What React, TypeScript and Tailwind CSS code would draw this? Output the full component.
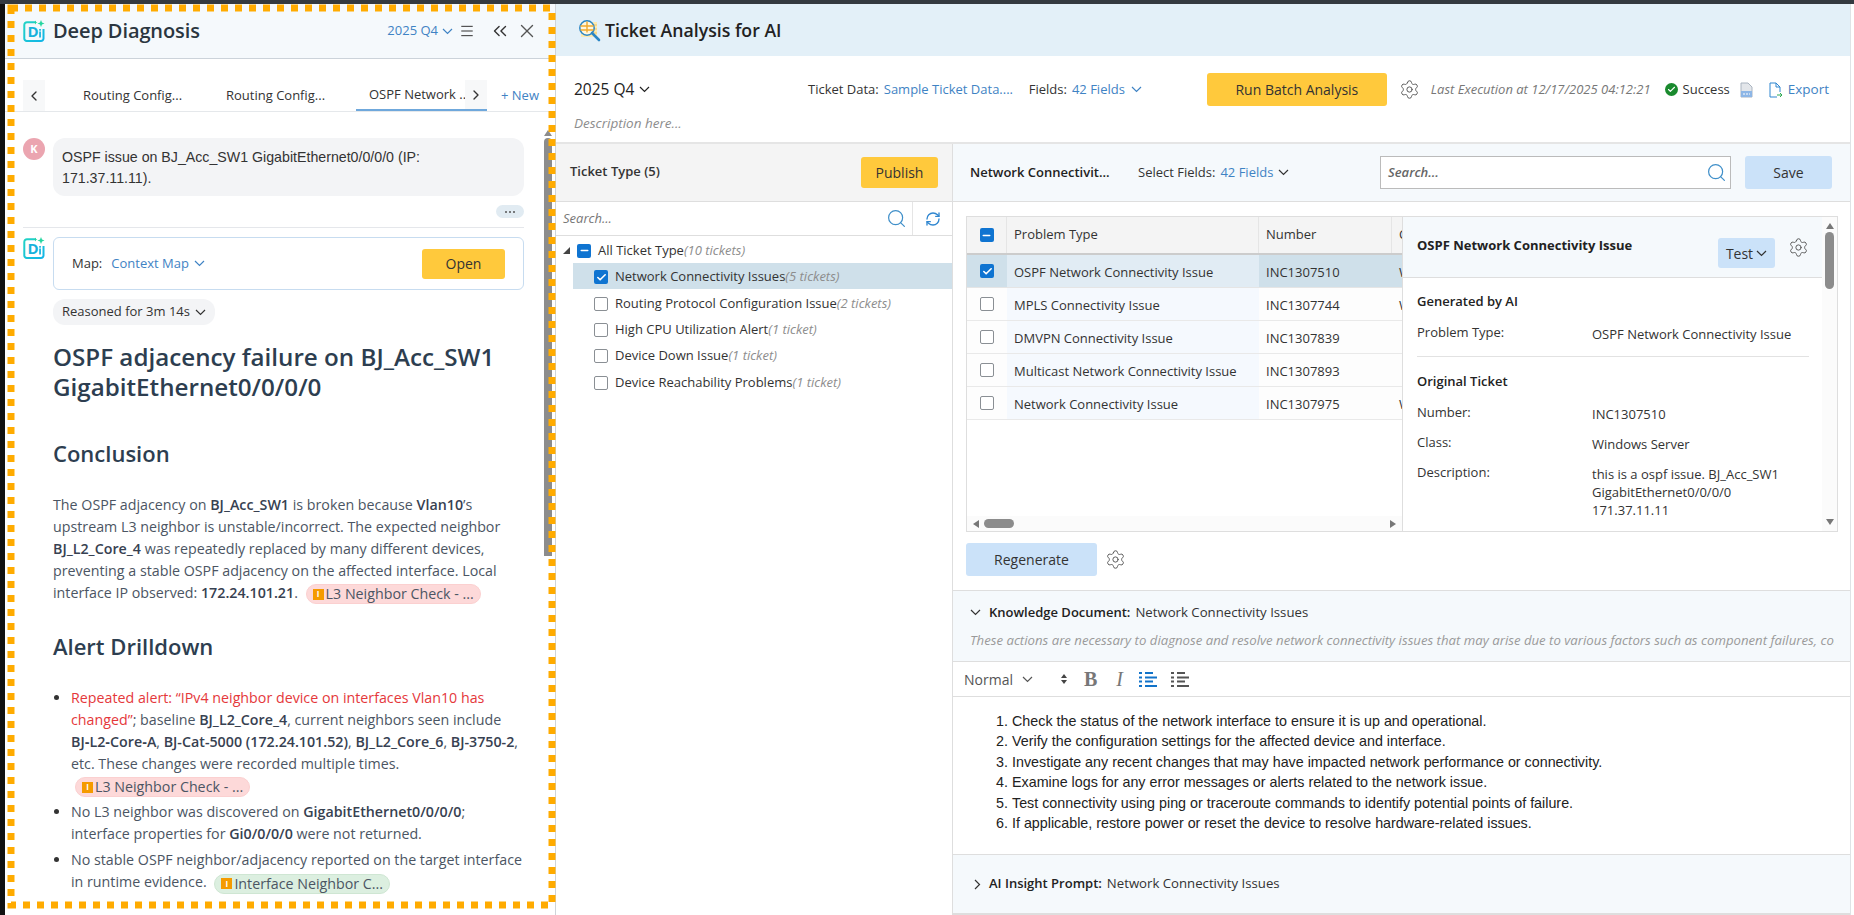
import { ChevronLeft, ChevronRight, ChevronsLeft, Menu, RefreshCw, Search, Settings, X, Check, Minus } from "lucide-react";

const openSans = "font-['Open_Sans',sans-serif]";
const strong = "font-semibold text-[#374151]";

const Chev = ({ className = "" }: { className?: string }) => (
  <svg className={`shrink-0 ${className}`} width="11" height="7" viewBox="0 0 11 7" fill="none">
    <path d="M1 1l4.5 4.5L10 1" stroke="currentColor" strokeWidth="1.2" />
  </svg>
);

const DLogo = () => (
  <svg className="shrink-0" width="22" height="22" viewBox="0 0 22 22" fill="none">
    <defs>
      <linearGradient id="dl" x1="0" y1="0" x2="1" y2="1">
        <stop offset="0" stopColor="#22d3c5" />
        <stop offset="1" stopColor="#12b5e8" />
      </linearGradient>
    </defs>
    <path d="M13 2.2H4A2.7 2.7 0 0 0 1.3 5v13.5A2.5 2.5 0 0 0 4 21h14a2.5 2.5 0 0 0 2.5-2.5V9" stroke="url(#dl)" strokeWidth="2" />
    <text x="4.5" y="17" fontSize="15" fontWeight="700" fill="#17b2dc" fontFamily="Open Sans, sans-serif">D</text>
    <rect x="16.2" y="11.5" width="1.7" height="6" fill="#17b2dc" />
    <rect x="16.2" y="9" width="1.7" height="1.7" fill="#17b2dc" />
    <path d="M18 0l1 2.4L21.5 3.5 19 4.6 18 7l-1-2.4-2.5-1.1L17 2.4z" fill="#25d6a0" />
    <path d="M12.5 0.5l.6 1.4 1.4.6-1.4.6-.6 1.4-.6-1.4-1.4-.6 1.4-.6z" fill="#25d6a0" />
  </svg>
);

const TicketLogo = () => (
  <svg width="23" height="23" viewBox="0 0 23 23" fill="none">
    <rect x="3" y="3" width="16" height="15" fill="#fdeab0" />
    <path d="M13 6h6M14 10h5M11 14h8" stroke="#f3c766" />
    <circle cx="9" cy="9" r="7.2" fill="#fff7dd" stroke="#2b86c5" strokeWidth="1.5" />
    <path d="M2.5 7h13M2.5 11h13M9 2.5v11" stroke="#f0a92e" strokeWidth="1.4" />
    <path d="M14 14l7 7" stroke="#2b86c5" strokeWidth="2.6" strokeLinecap="round" />
  </svg>
);

const ListIcon = ({ color, className }: { color: string; className: string }) => (
  <svg className={className} width="18" height="17" viewBox="0 0 18 17">
    <path d="M6 2h8M6 6.5h12M6 10.5h8M6 15h12" stroke={color} strokeWidth="2" />
    <path d="M0 1h3v2H0zM0 5.5h3v2H0zM0 9.5h3v2H0zM0 14h3v2H0z" fill={color} />
  </svg>
);

const CheckBox = ({ state }: { state?: "on" | "partial" }) => {
  if (state === "on")
    return (
      <span className="flex h-[14px] w-[14px] shrink-0 items-center justify-center rounded-[2px] bg-[#0f74d1]">
        <Check size={11} strokeWidth={3.5} color="#fff" />
      </span>
    );
  if (state === "partial")
    return (
      <span className="flex h-[14px] w-[14px] shrink-0 items-center justify-center rounded-[2px] bg-[#0f74d1]">
        <Minus size={11} strokeWidth={3.5} color="#fff" />
      </span>
    );
  return <span className="h-[14px] w-[14px] shrink-0 rounded-[2px] border border-[#8a8f94] bg-white" />;
};

const Pill = ({ label, green }: { label: string; green?: boolean }) => (
  <span
    className={`inline-flex h-[20px] items-center gap-[2px] rounded-full border px-[6px] align-middle ${
      green ? "border-[#cfe6d3] bg-[#dcefe0]" : "border-[#fbd0d0] bg-[#fdd9d9]"
    }`}
  >
    <span className="flex h-[11px] w-[11px] items-center justify-center bg-[#f59b00] text-[8px] font-bold leading-none text-white">
      I
    </span>
    {label}
  </span>
);

const tickets = [
  { label: "Routing Protocol Configuration Issue", count: "(2 tickets)", h: "h-[27px]" },
  { label: "High CPU Utilization Alert", count: "(1 ticket)", h: "h-[26px]" },
  { label: "Device Down Issue", count: "(1 ticket)", h: "h-[26px]" },
  { label: "Device Reachability Problems", count: "(1 ticket)", h: "h-[27px]" },
];

const rows = [
  { type: "MPLS Connectivity Issue", num: "INC1307744", cls: "W" },
  { type: "DMVPN Connectivity Issue", num: "INC1307839", cls: "" },
  { type: "Multicast Network Connectivity Issue", num: "INC1307893", cls: "" },
  { type: "Network Connectivity Issue", num: "INC1307975", cls: "W" },
];

const steps = [
  "Check the status of the network interface to ensure it is up and operational.",
  "Verify the configuration settings for the affected device and interface.",
  "Investigate any recent changes that may have impacted network performance or connectivity.",
  "Examine logs for any error messages or alerts related to the network issue.",
  "Test connectivity using ping or traceroute commands to identify potential points of failure.",
  "If applicable, restore power or reset the device to resolve hardware-related issues.",
];

const DiagnosisPanel = () => (
  <aside className="relative flex h-full w-[551px] shrink-0 flex-col overflow-hidden border-r border-[#cfd4d9] bg-white">
    <header className="flex h-[55px] shrink-0 items-center border-b border-[#ccd3da] bg-[#f5f9fc] pl-[18px] pr-[17px]">
      <DLogo />
      <h1 className="ml-[8px] text-[20px] font-semibold tracking-[-0.1px] text-[#2b3640]">Deep Diagnosis</h1>
      <span className="ml-auto flex items-center gap-[4px] text-[13px] text-[#3f83c4]">
        2025 Q4 <Chev />
      </span>
      <Menu size={16} strokeWidth={1.5} className="ml-[6px] text-[#333]" />
      <ChevronsLeft size={22} strokeWidth={1.5} className="ml-[14px] text-[#333]" />
      <X size={22} strokeWidth={1.5} className="ml-[5px] text-[#555]" />
    </header>
    <nav className="mt-[21px] flex h-[32px] shrink-0 items-stretch border-b border-[#e5e8eb] pl-[18px] text-[13px] text-[#333]">
      <span className="flex w-[22px] items-center justify-center bg-[#f7f8f9]">
        <ChevronLeft size={16} />
      </span>
      <span className="ml-[38px] flex w-[143px] items-center">Routing Config...</span>
      <span className="flex w-[130px] items-center">Routing Config...</span>
      <span className="relative flex w-[131px] items-center border-b-2 border-[#6fa8dc] pl-[13px]">
        OSPF Network ..
        <span className="absolute bottom-0 right-0 top-0 flex w-[22px] items-center justify-center bg-[#f7f8f9]">
          <ChevronRight size={16} />
        </span>
      </span>
      <span className="ml-[14px] flex items-center text-[13px] text-[#3f83c4]">+ New</span>
    </nav>
    <div className="min-h-0 flex-1 overflow-hidden pl-[18px] pr-[31px] pt-[26px] text-[14.25px] text-[#4b5563]">
      <div className="flex gap-[8px]">
        <span className="flex h-[22px] w-[22px] shrink-0 items-center justify-center rounded-full bg-[#eba5b0] text-[11px] font-bold text-white">
          K
        </span>
        <p className="h-[58px] flex-1 rounded-xl bg-[#f3f4f6] px-[9px] py-[9px] font-['Liberation_Sans',sans-serif] text-[14.2px] leading-[21px] text-[#333]">
          OSPF issue on BJ_Acc_SW1 GigabitEthernet0/0/0/0 (IP:
          <br />
          171.37.11.11).
        </p>
      </div>
      <div className="mt-[9px] flex justify-end">
        <span className="flex h-[13px] w-[28px] items-center justify-center gap-[2px] rounded-full bg-[#e1ebf2]">
          <i className="h-[2px] w-[2px] rounded-full bg-[#555]" />
          <i className="h-[2px] w-[2px] rounded-full bg-[#555]" />
          <i className="h-[2px] w-[2px] rounded-full bg-[#555]" />
        </span>
      </div>
      <div className="mt-[9px] flex gap-[8px] border-t border-[#e5e7eb] pt-[9px]">
        <DLogo />
        <div className="flex-1">
          <div className="flex h-[53px] items-center rounded-md border border-[#c7dcf0] pl-[18px] pr-[18px] text-[13px]">
            <span className="text-[#333]">Map:</span>
            <span className="ml-[9px] text-[#3f83c4]">Context Map</span>
            <Chev className="ml-[5px] text-[#3f83c4]" />
            <button className="ml-auto h-[30px] w-[83px] rounded-[3px] bg-[#ffc93c] text-[14px] text-[#333]">Open</button>
          </div>
          <span className="mt-[9px] inline-flex h-[26px] items-center gap-[5px] rounded-xl bg-[#f3f4f6] px-[9px] text-[13px] text-[#333]">
            Reasoned for 3m 14s <Chev />
          </span>
        </div>
      </div>
      <div className="ml-[30px]">
        <h2 className="mt-[17px] text-[24.2px] font-semibold leading-[30px] text-[#2d3e50]">
          OSPF adjacency failure on BJ_Acc_SW1 GigabitEthernet0/0/0/0
        </h2>
        <h3 className="mt-[37px] text-[22px] font-semibold leading-[28px] text-[#2d3e50]">Conclusion</h3>
        <p className="mt-[27px] leading-[22px]">
          The OSPF adjacency on <b className={strong}>BJ_Acc_SW1</b> is broken because <b className={strong}>Vlan10</b>’s
          upstream L3 neighbor is unstable/incorrect. The expected neighbor <b className={strong}>BJ_L2_Core_4</b> was
          repeatedly replaced by many different devices, preventing a stable OSPF adjacency on the affected interface.
          Local interface IP observed: <b className={strong}>172.24.101.21</b>.{" "}
          <span className="ml-[4px]">
            <Pill label="L3 Neighbor Check - ..." />
          </span>
        </p>
        <h3 className="mt-[28px] text-[22px] font-semibold leading-[28px] text-[#2d3e50]">Alert Drilldown</h3>
        <ul className="mt-[27px] list-disc pl-[18px] leading-[22px] marker:text-[#333]">
          <li>
            <span className="text-[#e5383b]">Repeated alert: “IPv4 neighbor device on interfaces Vlan10 has changed”</span>
            ; baseline <b className={strong}>BJ_L2_Core_4</b>, current neighbors seen include{" "}
            <b className={strong}>BJ&#8209;L2&#8209;Core&#8209;A</b>, <b className={strong}>BJ-Cat-5000 (172.24.101.52)</b>,{" "}
            <b className={strong}>BJ_L2_Core_6</b>, <b className={strong}>BJ-3750-2</b>, etc. These changes were recorded
            multiple times.{" "}
            <span className="ml-[4px]">
              <Pill label="L3 Neighbor Check - ..." />
            </span>
          </li>
          <li className="mt-[4px]">
            No L3 neighbor was discovered on <b className={strong}>GigabitEthernet0/0/0/0</b>; interface properties for{" "}
            <b className={strong}>Gi0/0/0/0</b> were not returned.
          </li>
          <li className="mt-[4px]">
            No stable OSPF neighbor/adjacency reported on the target interface in runtime evidence.{" "}
            <span className="ml-[4px]">
              <Pill label="Interface Neighbor C..." green />
            </span>
          </li>
        </ul>
      </div>
    </div>
    {/* scrollbar of the chat column */}
    <span className="absolute right-[3px] top-[126px] h-0 w-0 border-x-[4px] border-b-[6px] border-x-transparent border-b-[#8c8c8c]" />
    <span className="absolute right-[3px] top-[134px] h-[418px] w-[8px] rounded-t-full bg-[#8c8c8c]" />
  </aside>
);

const Toolbar = () => (
  <section className="flex h-[88px] shrink-0 flex-col border-b-2 border-[#e5e5e5] bg-white pl-[18px] pr-[8px]">
    <div className="mt-[17px] flex h-[33px] items-center whitespace-nowrap text-[13px] text-[#333]">
      <span className="flex w-[234px] shrink-0 items-center gap-[5px] text-[15.5px] font-medium text-[#222]">
        2025 Q4 <Chev />
      </span>
      <span>Ticket Data:</span>
      <span className="ml-[5px] w-[145px] shrink-0 text-[#3f83c4]">Sample Ticket Data....</span>
      <span>Fields:</span>
      <span className="ml-[5px] text-[#3f83c4]">42 Fields</span>
      <Chev className="ml-[6px] text-[#3f83c4]" />
      <button className="ml-[65px] h-[33px] w-[180px] shrink-0 rounded-[3px] bg-[#ffc93c] text-[14px] text-[#333]">
        Run Batch Analysis
      </button>
      <Settings size={21} strokeWidth={1.1} className="ml-[12px] shrink-0 text-[#555]" />
      <span className="ml-[11px] italic text-[#777]">Last Execution at 12/17/2025 04:12:21</span>
      <span className="ml-[14px] flex h-[13px] w-[13px] shrink-0 items-center justify-center rounded-full bg-[#1a8a2e]">
        <Check size={9} strokeWidth={3} color="#fff" />
      </span>
      <span className="ml-[5px]">Success</span>
      <svg className="ml-[10px] shrink-0" width="13" height="16" viewBox="0 0 13 16">
        <path d="M1 1h7l4 4v10H1z" fill="#e3e6ea" stroke="#aab4c0" />
        <rect x="1" y="9" width="11" height="6" fill="#8db6e6" />
        <path d="M3 12h7" stroke="#fff" strokeDasharray="2 1" />
      </svg>
      <svg className="ml-[16px] shrink-0" width="14" height="16" viewBox="0 0 14 16" fill="none">
        <path d="M8 15H1V1h6l4 4v5" stroke="#2f86d0" />
        <path d="M7 1v4h4" stroke="#2f86d0" />
        <path d="M8 13h5M11 11l2 2-2 2" stroke="#2eaa52" />
      </svg>
      <span className="ml-[5px] text-[13.5px] text-[#3f83c4]">Export</span>
    </div>
    <span className="mt-[7px] text-[13.5px] italic leading-[20px] text-[#8d8d8d]">Description here...</span>
  </section>
);

const TicketTypes = () => (
  <section className="flex w-[397px] shrink-0 flex-col border-r border-[#dedede] text-[13px] text-[#333]">
    <div className="flex h-[58px] shrink-0 items-center justify-between border-b border-[#dedede] bg-[#f4f4f4] pl-[14px] pr-[14px]">
      <span className="pb-[2px] font-semibold">Ticket Type (5)</span>
      <button className="h-[31px] w-[77px] rounded-[3px] bg-[#ffc93c] text-[14px]">Publish</button>
    </div>
    <div className="flex h-[34px] shrink-0 items-center border-b border-[#dedede] pl-[7px]">
      <span className="flex-1 italic text-[#777]">Search...</span>
      <Search size={21} strokeWidth={1.4} className="mr-[5px] text-[#3f8fc9]" />
      <span className="flex h-full w-[40px] items-center justify-center border-l border-[#e5e5e5]">
        <RefreshCw size={16} className="text-[#2f86d0]" />
      </span>
    </div>
    <div className="flex h-[27px] items-center pl-[7px] pt-[2px]">
      <span className="mr-[7px] h-0 w-0 border-b-[7px] border-l-[7px] border-b-[#444] border-l-transparent" />
      <CheckBox state="partial" />
      <span className="ml-[7px]">All Ticket Type</span>
      <em className="text-[#8d8d8d]">(10 tickets)</em>
    </div>
    <div className="ml-[17px] flex h-[26px] shrink-0 items-center bg-[#cfe0ea] pl-[21px] pt-[2px]">
      <CheckBox state="on" />
      <span className="ml-[7px]">Network Connectivity Issues</span>
      <em className="text-[#8d8d8d]">(5 tickets)</em>
    </div>
    {tickets.map((t) => (
      <div key={t.label} className={`ml-[17px] flex items-center pl-[21px] pt-[2px] ${t.h}`}>
        <CheckBox />
        <span className="ml-[7px]">{t.label}</span>
        <em className="text-[#8d8d8d]">{t.count}</em>
      </div>
    ))}
  </section>
);

const TicketTable = () => (
  <div className="flex h-[316px] border border-[#dedede] text-[13px] text-[#333]">
    <div className="relative flex w-[435px] shrink-0 flex-col overflow-hidden">
      <div className="flex h-[38px] shrink-0 border-b-2 border-[#ccc] bg-[#f4f4f4]">
        <span className="flex w-[40px] shrink-0 items-center justify-center border-r border-[#e5e5e5]">
          <CheckBox state="partial" />
        </span>
        <span className="flex w-[252px] shrink-0 items-center border-r border-[#e5e5e5] pl-[7px]">Problem Type</span>
        <span className="flex w-[133px] shrink-0 items-center border-r border-[#e5e5e5] pl-[7px]">Number</span>
        <span className="flex shrink-0 items-center pl-[7px]">Class</span>
      </div>
      <div className="flex h-[33px] shrink-0 border-b border-[#e5e5e5]">
        <span className="flex w-[40px] shrink-0 items-center justify-center bg-[#cfe0ea]">
          <CheckBox state="on" />
        </span>
        <span className="flex w-[252px] shrink-0 items-center bg-[#e1ecf4] pl-[7px] pt-[3px]">OSPF Network Connectivity Issue</span>
        <span className="flex w-[143px] shrink-0 items-center overflow-hidden bg-[#cfe0ea] pl-[7px] pt-[3px]">
          <span className="w-[133px] shrink-0">INC1307510</span>
          <span>Windows</span>
        </span>
      </div>
      {rows.map((r) => (
        <div key={r.num} className="flex h-[33px] shrink-0 border-b border-[#e9e9e9] bg-[#fdfdfd]">
          <span className="flex w-[40px] shrink-0 items-center justify-center">
            <CheckBox />
          </span>
          <span className="flex w-[252px] shrink-0 items-center whitespace-nowrap bg-[#f5f9fe] pl-[7px] pt-[3px]">{r.type}</span>
          <span className="flex w-[143px] shrink-0 items-center overflow-hidden pl-[7px] pt-[3px]">
            <span className="w-[133px] shrink-0">{r.num}</span>
            <span>{r.cls && "Windows"}</span>
          </span>
        </div>
      ))}
      <div className="mt-auto flex h-[15px] shrink-0 items-center bg-[#fbfbfb] pl-[6px] pr-[6px]">
        <span className="h-0 w-0 border-y-[4px] border-r-[6px] border-y-transparent border-r-[#777]" />
        <span className="ml-[5px] h-[9px] w-[30px] rounded-full bg-[#8c8c8c]" />
        <span className="ml-auto h-0 w-0 border-y-[4px] border-l-[6px] border-y-transparent border-l-[#777]" />
      </div>
    </div>
    <div className="flex min-w-0 flex-1 border-l border-[#dedede]">
      <div className="min-w-0 flex-1 overflow-hidden">
        <div className="flex h-[61px] items-center border-b border-[#dedede] bg-[#f5f9fc] pl-[14px] pr-[13px]">
          <span className="mb-[2px] font-bold text-[#222]">OSPF Network Connectivity Issue</span>
          <button className="ml-auto mt-[12px] flex h-[30px] w-[57px] shrink-0 items-center justify-center gap-[3px] rounded-[3px] bg-[#cbe2f9] text-[14px]">
            Test <Chev />
          </button>
          <Settings size={21} strokeWidth={1.1} className="ml-[13px] shrink-0 text-[#555]" />
        </div>
        <div className="pl-[14px] pr-[13px]">
          <h4 className="mt-[14px] font-semibold leading-[18px] text-[#222]">Generated by AI</h4>
          <dl className="mt-[13px] flex border-b border-[#e2e2e2] pb-[13px] leading-[18px]">
            <dt className="w-[175px] shrink-0">Problem Type:</dt>
            <dd className="pt-[2px]">OSPF Network Connectivity Issue</dd>
          </dl>
          <h4 className="mt-[15px] font-semibold leading-[18px] text-[#222]">Original Ticket</h4>
          <dl className="mt-[13px] flex leading-[18px]">
            <dt className="w-[175px] shrink-0">Number:</dt>
            <dd className="pt-[2px]">INC1307510</dd>
          </dl>
          <dl className="mt-[10px] flex leading-[18px]">
            <dt className="w-[175px] shrink-0">Class:</dt>
            <dd className="pt-[2px]">Windows Server</dd>
          </dl>
          <dl className="mt-[10px] flex leading-[18px]">
            <dt className="w-[175px] shrink-0">Description:</dt>
            <dd className="pt-[2px]">
              this is a ospf issue. BJ_Acc_SW1
              <br />
              GigabitEthernet0/0/0/0
              <br />
              171.37.11.11
            </dd>
          </dl>
        </div>
      </div>
      <div className="flex w-[15px] shrink-0 flex-col items-center bg-[#fbfbfb] py-[6px]">
        <span className="h-0 w-0 border-x-[4px] border-b-[6px] border-x-transparent border-b-[#777]" />
        <span className="mt-[3px] h-[57px] w-[9px] rounded-full bg-[#8c8c8c]" />
        <span className="mt-auto h-0 w-0 border-x-[4px] border-t-[6px] border-x-transparent border-t-[#777]" />
      </div>
    </div>
  </div>
);

const DetailColumn = () => (
  <section className="flex min-w-0 flex-1 flex-col text-[13px] text-[#333]">
    <div className="flex h-[58px] shrink-0 items-center border-b border-[#dedede] bg-[#f5f9fc] pl-[17px] pr-[18px]">
      <span className="w-[168px] shrink-0 font-semibold text-[#222]">Network Connectivit...</span>
      <span>Select Fields:</span>
      <span className="ml-[5px] text-[#3f83c4]">42 Fields</span>
      <Chev className="ml-[5px]" />
      <div className="ml-auto flex h-[33px] w-[351px] items-center justify-between border border-[#bbb] bg-white pl-[7px] pr-[3px]">
        <span className="font-semibold italic text-[#666]">Search...</span>
        <Search size={21} strokeWidth={1.4} className="text-[#3f8fc9]" />
      </div>
      <button className="ml-[14px] h-[33px] w-[87px] rounded-[3px] bg-[#cbe2f9] text-[14px]">Save</button>
    </div>
    <div className="shrink-0 pl-[13px] pr-[12px] pt-[14px]">
      <TicketTable />
      <div className="mt-[11px] flex items-center">
        <button className="h-[33px] w-[131px] rounded-[3px] bg-[#cbe2f9] text-[14px]">Regenerate</button>
        <Settings size={21} strokeWidth={1.1} className="ml-[8px] text-[#555]" />
      </div>
    </div>
    <div className="mt-[14px] h-[72px] shrink-0 overflow-hidden border-y border-[#dedede] bg-[#f5f9fc] pl-[17px] pr-[16px]">
      <div className="mt-[12px] flex items-center">
        <Chev />
        <b className="ml-[8px] font-semibold text-[#222]">Knowledge Document:</b>
        <span className="ml-[5px] text-[13.2px]">Network Connectivity Issues</span>
      </div>
      <p className="mt-[8px] overflow-hidden whitespace-nowrap text-[13.2px] italic text-[#9a9a9a]">
        These actions are necessary to diagnose and resolve network connectivity issues that may arise due to various
        factors such as component failures, configuration errors, or network outages.
      </p>
    </div>
    <div className="flex h-[35px] shrink-0 items-center border-b border-[#dedede] pl-[11px] text-[#555]">
      <span className="text-[14px]">Normal</span>
      <Chev className="ml-[9px]" />
      <span className="ml-[28px] flex flex-col gap-[2px]">
        <span className="h-0 w-0 border-x-[3px] border-b-[4px] border-x-transparent border-b-[#444]" />
        <span className="h-0 w-0 border-x-[3px] border-t-[4px] border-x-transparent border-t-[#444]" />
      </span>
      <span className="ml-[17px] font-['Liberation_Serif',serif] text-[20px] font-bold text-[#777]">B</span>
      <span className="ml-[19px] font-['Liberation_Serif',serif] text-[20px] italic text-[#777]">I</span>
      <ListIcon color="#1273c9" className="ml-[16px]" />
      <ListIcon color="#555" className="ml-[14px]" />
    </div>
    <ol className="h-[158px] shrink-0 list-decimal border-b border-[#dedede] pl-[59px] pt-[14px] font-['Liberation_Sans',sans-serif] text-[14.3px] leading-[20.4px] text-[#222]">
      {steps.map((s) => (
        <li key={s}>{s}</li>
      ))}
    </ol>
    <div className="flex h-[60px] shrink-0 items-center border-b-2 border-[#dedede] bg-[#f5f9fc] pl-[21px]">
      <svg className="shrink-0" width="7" height="11" viewBox="0 0 7 11" fill="none">
        <path d="M1 1l4.5 4.5L1 10" stroke="currentColor" strokeWidth="1.2" />
      </svg>
      <b className="ml-[8px] font-semibold text-[#222]">AI Insight Prompt:</b>
      <span className="ml-[5px] text-[13.2px]">Network Connectivity Issues</span>
    </div>
  </section>
);

const App = () => {
  return (
    <div className={`flex h-[915px] w-[1854px] flex-col overflow-hidden bg-white ${openSans}`}>
      <div className="h-[4px] shrink-0 bg-[#343a40]" />
      <div className="relative flex min-h-0 flex-1">
        <div className="w-[5px] shrink-0 bg-[#111]" />
        <DiagnosisPanel />
        <main className="mr-[3px] flex min-w-0 flex-1 flex-col border-r border-[#dfe3e6]">
          <div className="flex h-[52px] shrink-0 items-center bg-[#e3f0f8] pl-[22px]">
            <TicketLogo />
            <h1 className="ml-[4px] text-[17.7px] font-semibold text-[#222]">Ticket Analysis for AI</h1>
          </div>
          <Toolbar />
          <div className="flex min-h-0 flex-1">
            <TicketTypes />
            <DetailColumn />
          </div>
        </main>
        {/* orange selection outline around the chat panel */}
        <svg className="pointer-events-none absolute left-0 top-0" width="560" height="915" fill="none">
          <rect x="11" y="4" width="541" height="897" stroke="#ffab00" strokeWidth="7" strokeDasharray="7 7" />
        </svg>
      </div>
    </div>
  );
};

export default App;
